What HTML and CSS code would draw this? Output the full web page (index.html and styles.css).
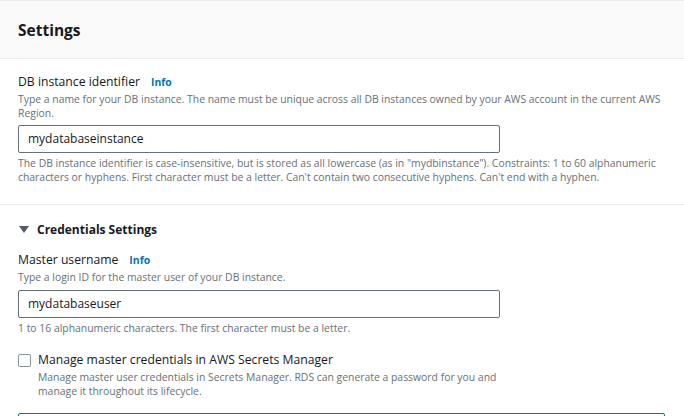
FILE: index.html
```html
<!DOCTYPE html>
<html>
<head>
<meta charset="utf-8">
<link rel="stylesheet" href="styles.css">
</head>
<body>
<div class="panel">
  <div class="header"><h2 class="title">Settings</h2></div>
  <div class="section">
    <div class="field">
      <div class="label-row"><span class="label">DB instance identifier</span><a class="info">Info</a></div>
      <div class="desc">Type a name for your DB instance. The name must be unique across all DB instances owned by your AWS account in the current AWS Region.</div>
      <div class="input">mydatabaseinstance</div>
      <div class="hint">The DB instance identifier is case-insensitive, but is stored as all lowercase (as in "mydbinstance"). Constraints: 1 to 60 alphanumeric characters or hyphens. First character must be a letter. Can't contain two consecutive hyphens. Can't end with a hyphen.</div>
    </div>
  </div>
  <div class="section section2">
    <div class="expander">
      <svg class="caret" width="10" height="7" viewBox="0 0 10 7"><path d="M0 0 H10 L5 7 Z" fill="#545b64"/></svg>
      <span>Credentials Settings</span>
    </div>
    <div class="field">
      <div class="label-row"><span class="label">Master username</span><a class="info">Info</a></div>
      <div class="desc">Type a login ID for the master user of your DB instance.</div>
      <div class="input input2">mydatabaseuser</div>
      <div class="hint">1 to 16 alphanumeric characters. The first character must be a letter.</div>
    </div>
    <div class="check">
      <span class="box"></span>
      <div class="check-text">
        <div class="check-label">Manage master credentials in AWS Secrets Manager</div>
        <div class="desc desc-check">Manage master user credentials in Secrets Manager. RDS can generate a password for you and manage it throughout its lifecycle.</div>
      </div>
    </div>
    <div class="bluebox"></div>
  </div>
</div>
</body>
</html>
```

FILE: styles.css
```css
html, body {
  margin: 0;
  padding: 0;
  background: #fff;
  font-family: "Open Sans", "Liberation Sans", sans-serif;
  color: #16191f;
  overflow: hidden;
}
.panel {
  border-top: 1px solid #eaeded;
}
.header {
  background: #fafafa;
  border-bottom: 1px solid #eaeded;
  height: 57px;
  display: flex;
  align-items: center;
  padding: 0 18px;
}
.title {
  margin: 0;
  font-size: 15.5px;
  font-weight: 700;
  color: #16191f;
  line-height: 20px;
}
.section {
  padding: 13px 18px 20px 18px;
  border-bottom: 1px solid #eaeded;
}
.section2 {
  border-bottom: none;
  padding-top: 14px;
  padding-bottom: 0;
}
.label-row {
  display: flex;
  align-items: baseline;
  line-height: 20px;
  height: 20px;
}
.label {
  font-size: 12.2px;
  color: #16191f;
}
.info {
  font-size: 10.4px;
  font-weight: 700;
  color: #0073bb;
  margin-left: 11px;
}
.desc {
  font-size: 10.4px;
  line-height: 14px;
  color: #687078;
}
.input {
  margin-top: 5px;
  width: 462px;
  height: 26px;
  border: 1px solid #687078;
  border-radius: 2px;
  padding: 0 9px;
  font-size: 12px;
  line-height: 26px;
  color: #16191f;
}
.input2 {
  margin-top: 6px;
}
.hint {
  font-size: 10.4px;
  line-height: 14px;
  color: #687078;
  margin-top: 3px;
  padding-right: 6px;
}
.expander {
  display: flex;
  align-items: center;
  height: 20px;
  font-size: 12px;
  font-weight: 700;
  color: #16191f;
  margin-bottom: 11px;
}
.caret {
  margin-left: 1px;
  margin-right: 8px;
  margin-top: 1px;
}
.check {
  display: flex;
  margin-top: 16px;
}
.box {
  width: 11px;
  height: 11px;
  border: 1px solid #879596;
  border-radius: 2px;
  margin-top: 3px;
  flex: none;
}
.check-text {
  margin-left: 7px;
  width: 480px;
}
.check-label {
  font-size: 12.2px;
  line-height: 18px;
  color: #16191f;
}
.desc-check {
  margin-top: 1px;
}
.bluebox {
  margin-top: 15px;
  width: 645px;
  height: 40px;
  border: 1px solid #0073bb;
  border-radius: 2px;
}
```
